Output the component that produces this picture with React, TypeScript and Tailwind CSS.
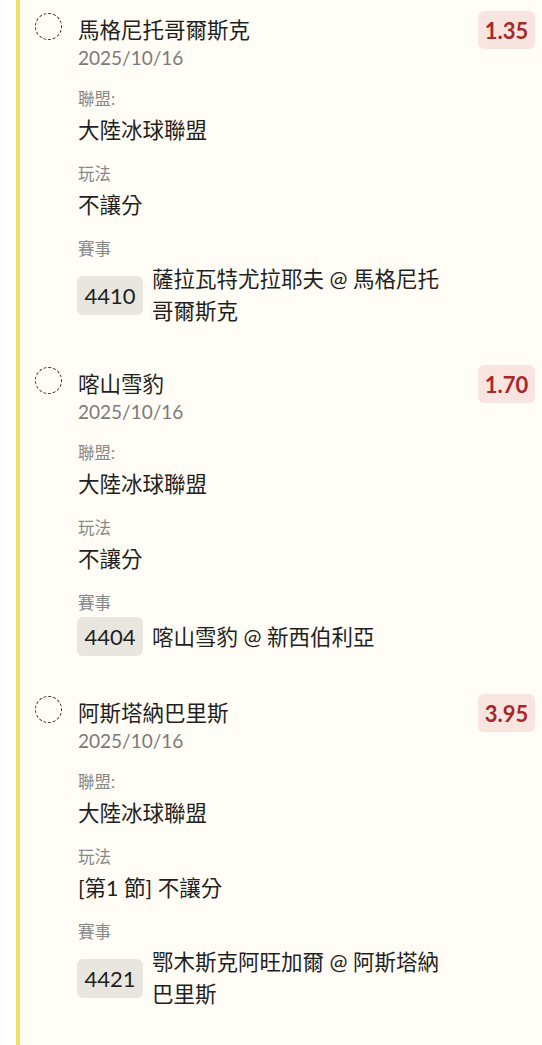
const font = { fontFamily: "Lato, 'Noto Sans CJK TC', sans-serif" };

type Bet = {
  team: string;
  date: string;
  odds: string;
  league: string;
  play: string;
  matchNo: string;
  match: string;
};

const bets: Bet[] = [
  {
    team: "馬格尼托哥爾斯克",
    date: "2025/10/16",
    odds: "1.35",
    league: "大陸冰球聯盟",
    play: "不讓分",
    matchNo: "4410",
    match: "薩拉瓦特尤拉耶夫 @ 馬格尼托哥爾斯克",
  },
  {
    team: "喀山雪豹",
    date: "2025/10/16",
    odds: "1.70",
    league: "大陸冰球聯盟",
    play: "不讓分",
    matchNo: "4404",
    match: "喀山雪豹 @ 新西伯利亞",
  },
  {
    team: "阿斯塔納巴里斯",
    date: "2025/10/16",
    odds: "3.95",
    league: "大陸冰球聯盟",
    play: "[第1 節] 不讓分",
    matchNo: "4421",
    match: "鄂木斯克阿旺加爾 @ 阿斯塔納巴里斯",
  },
];

function BetItem({ bet }: { bet: Bet }) {
  return (
    <div className="flex items-start pl-[15px] pr-[7px]">
      <div className="-mt-[3px] h-[27px] w-[27px] shrink-0 rounded-full border border-dashed border-[#333]" />
      <div className="ml-[16px] min-w-0 flex-1">
        <div className="flex items-center justify-between">
          <div className="text-[21.5px] leading-[28px] text-[#1f1f1f]">{bet.team}</div>
          <div className="-my-[5px] flex h-[38px] w-[57px] items-center justify-center rounded-md bg-[#f8e5df] text-[22px] font-bold text-[#a8272b]">
            {bet.odds}
          </div>
        </div>
        <div className="mt-[1px] text-[19px] leading-[26px] text-[#7a7a7a]">{bet.date}</div>

        <div className="mt-4 text-[16.5px] leading-[24px] text-[#888]">聯盟:</div>
        <div className="mt-1 text-[21.5px] leading-[30px] text-[#1f1f1f]">{bet.league}</div>

        <div className="mt-[17px] text-[16.5px] leading-[24px] text-[#888]">玩法</div>
        <div className="mt-1 text-[21.5px] leading-[30px] text-[#1f1f1f]">{bet.play}</div>

        <div className="mt-[17px] text-[16.5px] leading-[24px] text-[#888]">賽事</div>
        <div className="mt-[2px] flex items-center">
          <div className="-ml-px flex h-[39px] w-[66px] shrink-0 items-center justify-center rounded-md bg-[#e9e6df] text-[22px] text-[#1f1f1f]">
            {bet.matchNo}
          </div>
          <div className="ml-[9px] max-w-[300px] flex-1 text-[21.5px] leading-[32px] text-[#1f1f1f]">
            {bet.match}
          </div>
        </div>
      </div>
    </div>
  );
}

export default function App() {
  return (
    <div className="min-h-screen bg-white pl-4" style={font}>
      <div className="min-h-screen border-l-4 border-[#ebe36b] bg-[#fffdf5] pb-10 pt-4">
        <div className="flex flex-col gap-[43px]">
          {bets.map((bet) => (
            <BetItem key={bet.matchNo} bet={bet} />
          ))}
        </div>
      </div>
    </div>
  );
}
